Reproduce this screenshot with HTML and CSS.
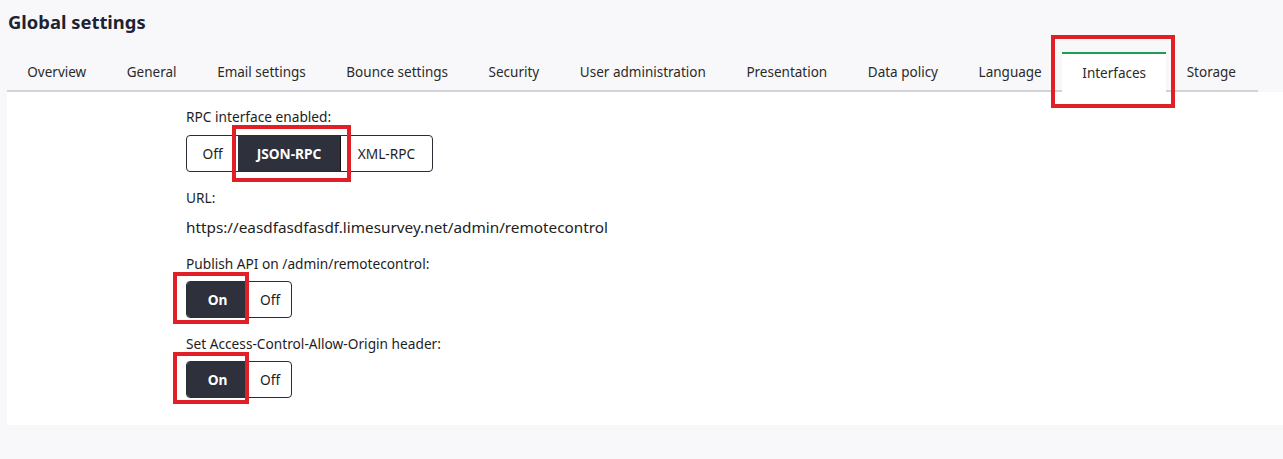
FILE: index.html
```html
<!DOCTYPE html>
<html>
<head>
<meta charset="utf-8">
<link rel="stylesheet" href="styles.css">
</head>
<body>
<h1 class="title">Global settings</h1>
<nav class="tabs">
  <a class="tab">Overview</a>
  <a class="tab">General</a>
  <a class="tab">Email settings</a>
  <a class="tab">Bounce settings</a>
  <a class="tab">Security</a>
  <a class="tab">User administration</a>
  <a class="tab">Presentation</a>
  <a class="tab">Data policy</a>
  <a class="tab">Language</a>
  <a class="tab active">Interfaces<span class="mark mark-tab"></span></a>
  <a class="tab">Storage</a>
</nav>
<main class="panel">
  <div class="field">
    <div class="label">RPC interface enabled:</div>
    <div class="group">
      <span class="btn btn-off3">Off</span>
      <span class="btn btn-json sel">JSON-RPC<span class="mark mark-json"></span></span>
      <span class="btn btn-xml">XML-RPC</span>
    </div>
  </div>
  <div class="field">
    <div class="label">URL:</div>
    <div class="url">https://easdfasdfasdf.limesurvey.net/admin/remotecontrol</div>
  </div>
  <div class="field">
    <div class="label">Publish API on /admin/remotecontrol:</div>
    <div class="group">
      <span class="btn btn-on sel">On<span class="mark mark-on"></span></span>
      <span class="btn btn-off2">Off</span>
    </div>
  </div>
  <div class="field">
    <div class="label">Set Access-Control-Allow-Origin header:</div>
    <div class="group">
      <span class="btn btn-on sel">On<span class="mark mark-on"></span></span>
      <span class="btn btn-off2">Off</span>
    </div>
  </div>
</main>
</body>
</html>
```

FILE: styles.css
```css
* { box-sizing: border-box; }
html, body { margin: 0; padding: 0; }
body {
  background: #f8f8fa;
  font-family: "Noto Sans", "Liberation Sans", sans-serif;
  color: #1e1e1e;
  width: 1283px;
  height: 459px;
  overflow: hidden;
}
.title {
  margin: 0;
  padding: 10px 0 0 8px;
  height: 52px;
  font-size: 18.4px;
  font-weight: 700;
  color: #1c2433;
  line-height: 24px;
}
.tabs {
  display: flex;
  margin-left: 7px;
  width: 1251px;
  height: 40px;
  border-bottom: 2px solid #d3d3d7;
}
.tab {
  position: relative;
  padding: 0 20.3px;
  height: 40px;
  line-height: 40px;
  font-size: 13.5px;
  color: #2a2a2a;
  white-space: nowrap;
}
.tab.active {
  background: #fff;
  border-top: 2px solid #1f9d55;
  height: 42px;
  line-height: 38px;
  margin-bottom: -2px;
}
.panel {
  margin-left: 7px;
  background: #fff;
  height: 333px;
  padding: 16px 0 0 179px;
}
.field { margin-bottom: 17px; }
.label {
  font-size: 13.7px;
  line-height: 18px;
  color: #1e1e1e;
  margin-bottom: 8px;
}
.field:first-child .label { margin-bottom: 9px; }
.group {
  display: flex;
  width: max-content;
  border: 1px solid #2b2d36;
  border-radius: 4px;
  height: 37px;
}
.btn {
  position: relative;
  display: flex;
  align-items: center;
  justify-content: center;
  font-size: 13.7px;
  color: #1e1e1e;
}
.btn.sel {
  background: #2e303b;
  color: #fff;
  font-weight: 700;
}
.btn-off3 { width: 51px; }
.btn-json { width: 103px; border-right: 1px solid #111; }
.btn-xml { width: 91px; }
.btn-on { width: 62px; border-right: 1px solid #111; border-radius: 3px 0 0 3px; }
.btn-off2 { width: 42px; }
.url {
  font-size: 15.3px;
  line-height: 22px;
  color: #222;
  margin-top: 9px;
}
.mark {
  position: absolute;
  border: 4px solid #e01f26;
  pointer-events: none;
}
.mark-tab { left: -11px; right: -9px; top: -19px; bottom: -14px; }
.mark-json { left: -6px; right: -11px; top: -11px; bottom: -11px; }
.mark-on { left: -14px; right: -1px; top: -10px; bottom: -7px; }
```
